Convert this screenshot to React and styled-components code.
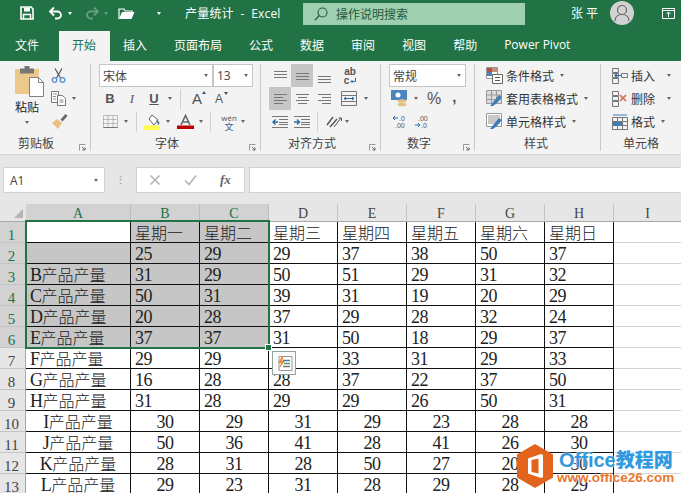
import React from 'react';
import styled, { createGlobalStyle } from 'styled-components';

const UI_FONT = '"Open Sans", "Noto Sans CJK SC", sans-serif';
const CELL_FONT = '"Liberation Serif", "Noto Sans CJK SC", serif';
const GREEN = '#217346';

const GlobalStyle = createGlobalStyle`
  html, body { margin: 0; padding: 0; background: #fff; }
  body { font-family: ${UI_FONT}; color: #333; }
`;

const Page = styled.div`
  width: 681px;
  height: 493px;
  overflow: hidden;
  position: relative;
`;

/* title bar */
const TitleBar = styled.div`
  height: 31px;
  background: ${GREEN};
  display: flex;
  align-items: center;
  box-sizing: border-box;
  padding-bottom: 5px;
  color: #fff;
  font-size: 12px;
`;
const QuickIcon = styled.div`
  width: ${p => p.$w}px;
  margin-left: ${p => p.$ml || 0}px;
  display: flex;
  align-items: center;
  opacity: ${p => (p.$dim ? 0.3 : 1)};
`;
const TitleCaret = styled.span`
  width: 0;
  height: 0;
  margin-left: ${p => p.$ml || 5}px;
  border-left: 2.5px solid transparent;
  border-right: 2.5px solid transparent;
  border-top: 3px solid #fff;
`;
const DocTitle = styled.div`
  margin-left: 28px;
  width: 118px;
  letter-spacing: 0.2px;
  white-space: pre;
`;
const SearchBox = styled.div`
  width: 222px;
  height: 22px;
  margin-top: 2px;
  background: #9fcfb1;
  color: #24593a;
  display: flex;
  align-items: center;
  gap: 8px;
  padding-left: 11px;
  box-sizing: border-box;
`;
const UserName = styled.div`
  margin-left: 46px;
  width: 39px;
  white-space: pre;
`;
const Avatar = styled.div`
  width: 24px;
  height: 24px;
  border-radius: 50%;
  background: #d2d2d2;
  display: flex;
  align-items: center;
  justify-content: center;
`;

/* tabs */
const TabBar = styled.div`
  height: 30px;
  background: ${GREEN};
  display: flex;
  padding-left: 1.5px;
`;
const Tab = styled.div`
  padding: 0 13.5px 3px;
  margin-right: ${p => p.$mr || 0}px;
  display: flex;
  align-items: center;
  font-size: 12px;
  color: ${p => (p.$active ? GREEN : '#fff')};
  background: ${p => (p.$active ? '#f3f3f3' : 'transparent')};
  white-space: nowrap;
`;

/* ribbon */
const Ribbon = styled.div`
  height: 94px;
  background: #f3f3f3;
  border-bottom: 1px solid #d6d6d6;
  display: flex;
  box-sizing: border-box;
  padding-top: 3px;
`;
const Group = styled.div`
  width: ${p => p.$w}px;
  flex: none;
  height: 87px;
  position: relative;
  border-right: ${p => (p.$last ? 'none' : '1px solid #c8c8c8')};
  box-sizing: border-box;
  display: flex;
  flex-direction: column;
`;
const GroupBody = styled.div`
  height: 72px;
  padding-left: ${p => p.$pl || 0}px;
  display: flex;
  flex-direction: ${p => p.$dir || 'column'};
  box-sizing: border-box;
`;
const GroupLabel = styled.div`
  font-size: 12px;
  height: 15px;
  line-height: 15px;
  padding-left: ${p => p.$pl}px;
  color: #444;
`;
const Launcher = styled.svg`
  position: absolute;
  right: 4px;
  bottom: 0;
  width: 7px;
  height: 7px;
`;
const Row = styled.div`
  height: ${p => p.$h || 23}px;
  display: flex;
  align-items: center;
  gap: ${p => p.$gap || 0}px;
  padding-left: ${p => p.$pl || 0}px;
`;
const Caret = styled.span`
  display: inline-block;
  flex: none;
  width: 0;
  height: 0;
  margin-left: ${p => p.$ml || 0}px;
  border-left: 2.5px solid transparent;
  border-right: 2.5px solid transparent;
  border-top: 3px solid #666;
`;
const RowDivider = styled.span`
  width: 1px;
  height: 20px;
  background: #d0d0d0;
  margin: 0 ${p => p.$mr || 8}px 0 ${p => p.$ml || 8}px;
  flex: none;
`;
const Spacer = styled.span`
  width: ${p => p.$w}px;
  flex: none;
`;
const Select = styled.div`
  width: ${p => p.$w}px;
  height: 23px;
  background: #fff;
  border: 1px solid #c6c6c6;
  box-sizing: border-box;
  display: flex;
  align-items: center;
  justify-content: space-between;
  padding: 0 4px 0 3px;
  font-size: 12px;
  color: #444;
  flex: none;
`;
const FontLetter = styled.span`
  width: ${p => p.$w || 22}px;
  text-align: center;
  font-family: ${p => (p.$serif ? '"Liberation Serif", serif' : '"Liberation Sans", sans-serif')};
  font-size: ${p => p.$size || 13}px;
  font-weight: ${p => (p.$bold ? 700 : 400)};
  font-style: ${p => (p.$italic ? 'italic' : 'normal')};
  text-decoration: ${p => (p.$under ? 'underline' : 'none')};
  color: #555;
  flex: none;
`;
const GrowLetter = styled(FontLetter)`
  position: relative;
  &::after {
    content: '';
    position: absolute;
    right: 2px;
    top: ${p => (p.$down ? 0 : 1)}px;
    border-left: 2.5px solid transparent;
    border-right: 2.5px solid transparent;
    ${p => (p.$down ? 'border-top: 3px solid #44546a;' : 'border-bottom: 3px solid #44546a;')}
  }
`;
const WenButton = styled.div`
  width: 18px;
  margin-left: 1px;
  display: flex;
  flex-direction: column;
  align-items: center;
  font-size: 8px;
  line-height: 9px;
  color: #555;
  & b {
    font-weight: 400;
    color: #2b579a;
    font-size: 9px;
  }
`;
const AlignTop = styled.div`
  display: flex;
`;
const AlignGrid = styled.div`
  display: grid;
  grid-template-columns: repeat(3, 22px);
  grid-auto-rows: 23px;
  flex: none;
`;
const AlignCell = styled.div`
  width: 22px;
  height: 23px;
  flex: none;
  display: flex;
  align-items: center;
  justify-content: center;
  background: ${p => (p.$on ? '#c6c6c6' : 'transparent')};
`;
const AlignSide = styled.div`
  display: flex;
  flex-direction: column;
  margin-left: 6px;
`;
const WrapText = styled.div`
  width: 16px;
  margin-left: 1px;
  font-family: "Liberation Sans", sans-serif;
  font-size: 10px;
  line-height: 9px;
  font-weight: 700;
  color: #555;
  text-align: center;
  & svg { margin-left: 1px; }
`;
const BigLabel = styled.div`
  width: 24px;
  margin-top: 3px;
  font-size: 12px;
  line-height: 16px;
  color: #222;
  display: flex;
  flex-direction: column;
  align-items: center;
  gap: 5px;
`;
const PasteCol = styled.div`
  display: flex;
  flex-direction: column;
  margin-left: 15px;
  margin-top: 2px;
`;
const SmallCol = styled.div`
  display: flex;
  flex-direction: column;
  margin-left: 7px;
  gap: 5px;
  padding-top: 2px;
`;
const SmallRow = styled.div`
  display: flex;
  align-items: center;
  height: 18px;
`;
const Percent = styled.span`
  font-family: "Liberation Sans", sans-serif;
  font-size: 16px;
  color: #555;
  margin-left: 9px;
`;
const Comma = styled.span`
  font-family: "Liberation Sans", sans-serif;
  font-weight: 700;
  font-size: 15px;
  color: #555;
  margin-left: 11px;
  margin-top: -5px;
`;
const CommandRow = styled.div`
  height: 23px;
  display: flex;
  align-items: center;
  font-size: 12px;
  color: #333;
  gap: 3px;
  & svg { flex: none; }
`;

/* formula bar */
const FormulaBar = styled.div`
  height: 49px;
  background: #e6e6e6;
  display: flex;
  padding: 12px 0 0 3px;
  box-sizing: border-box;
`;
const FormulaBox = styled.div`
  height: 26px;
  background: #fff;
  border: 1px solid #d2d2d2;
  box-sizing: border-box;
  display: flex;
  align-items: center;
`;
const NameBox = styled(FormulaBox)`
  width: 102px;
  justify-content: space-between;
  padding: 0 6px;
  font-size: 12px;
  color: #444;
`;
const Grip = styled.div`
  width: 31px;
  text-align: center;
  color: #a8a8a8;
  font-size: 11px;
  line-height: 26px;
  font-weight: 700;
`;
const FxBox = styled(FormulaBox)`
  width: 109px;
  padding-left: 12px;
  gap: 23px;
`;
const FxText = styled.span`
  font-family: "Liberation Serif", serif;
  font-style: italic;
  font-weight: 700;
  font-size: 13px;
  color: #666;
`;
const FormulaInput = styled(FormulaBox)`
  flex: 1;
  margin-left: 4px;
  border-right: none;
`;

/* sheet */
const Sheet = styled.div`
  position: relative;
  display: grid;
  grid-template-columns: 26px 105px repeat(7, 69px) 68px;
  grid-template-rows: 18px;
  grid-auto-rows: 21px;
  background: #fff;
  font-family: ${CELL_FONT};
`;
const Corner = styled.div`
  background: #e6e6e6;
  border-bottom: 1px solid #a8a8a8;
  position: relative;
  &::after {
    content: '';
    position: absolute;
    right: 3px;
    bottom: 3px;
    border-left: 9px solid transparent;
    border-bottom: 9px solid #b4b4b4;
  }
`;
const ColHead = styled.div`
  background: ${p => (p.$sel ? '#d2d2d2' : '#e6e6e6')};
  border-right: 1px solid ${p => (p.$sel ? '#bdbdbd' : '#c4c4c4')};
  border-bottom: 1px solid #a8a8a8;
  box-sizing: border-box;
  font-size: 14px;
  line-height: 20px;
  overflow: hidden;
  text-align: center;
  color: ${p => (p.$sel ? GREEN : '#444')};
`;
const RowHead = styled.div`
  background: ${p => (p.$sel ? '#d2d2d2' : '#e6e6e6')};
  border-bottom: 1px solid #c4c4c4;
  border-right: 1px solid #a8a8a8;
  box-sizing: border-box;
  padding-right: 2px;
  font-size: 15px;
  line-height: 26px;
  overflow: hidden;
  text-align: center;
  color: ${p => (p.$sel ? GREEN : '#444')};
`;
const Cell = styled.div`
  background: ${p => (p.$sel ? '#c6c6c6' : '#fff')};
  border-right: 1px solid ${p => (p.$empty ? '#d4d4d4' : '#111')};
  border-bottom: 1px solid ${p => (p.$empty ? '#d4d4d4' : '#111')};
  box-sizing: border-box;
  padding: 0 ${p => (p.$center ? 0 : 4)}px;
  text-align: ${p => (p.$center ? 'center' : 'left')};
  font-size: 18px;
  font-weight: 300;
  letter-spacing: -0.6px;
  line-height: 23px;
  color: #222;
  white-space: nowrap;
  overflow: hidden;
`;
const CjkText = styled.span`
  font-size: 16px;
  letter-spacing: 0;
`;
const Selection = styled.div`
  position: absolute;
  left: 25px;
  top: 16px;
  width: 245px;
  height: 129px;
  border: 2px solid ${GREEN};
  box-sizing: border-box;
  pointer-events: none;
`;
const Handle = styled.div`
  position: absolute;
  right: -4px;
  bottom: -4px;
  width: 5px;
  height: 5px;
  background: ${GREEN};
  border: 1px solid #fff;
`;
const QuickButton = styled.div`
  position: absolute;
  left: 272px;
  top: 147px;
  width: 24px;
  height: 24px;
  box-sizing: border-box;
  background: #fafafa;
  border: 1px solid #8fa89a;
  display: flex;
  align-items: center;
  justify-content: center;
`;

/* site watermark */
const Watermark = styled.div`
  position: absolute;
  left: 517px;
  top: 444px;
  display: flex;
`;
const WatermarkText = styled.div`
  margin-left: 6px;
  padding-top: 5px;
  font-family: "Liberation Sans", "Noto Sans CJK SC", sans-serif;
  font-weight: 700;
  display: flex;
  flex-direction: column;
  white-space: nowrap;
`;
const BrandLine = styled.span`
  font-size: 20px;
  line-height: 22px;
  color: #2f9ae0;
  text-shadow: 0 0 2px #fff, 0 0 2px #fff;
  & b {
    font-size: 19px;
  }
`;
const SiteLine = styled.span`
  margin-left: -2px;
  font-size: 13.5px;
  line-height: 11px;
  color: #e8772e;
  text-shadow: 0 0 2px #fff, 0 0 2px #fff;
`;

const Svg = ({ w = 16, h = 16, children }) => (
  <svg width={w} height={h} viewBox={`0 0 ${w} ${h}`} fill="none">{children}</svg>
);

const LauncherIcon = () => (
  <Launcher viewBox="0 0 7 7" fill="none">
    <path d="M.5 6.500v-6h6" stroke="#999" />
    <path d="M3 3l3 3M6 3.500v2.500H3.500" stroke="#666" />
  </Launcher>
);

const SaveIcon = () => (
  <Svg w={14} h={14}>
    <path d="M1 1h10l2 2v10H1z" stroke="#fff" strokeWidth="1.6" />
    <path d="M4 1.500h6v4H4z" fill="#fff" />
    <path d="M3.500 13V8.500h7V13" stroke="#fff" strokeWidth="1.5" />
  </Svg>
);
const UndoIcon = () => (
  <Svg w={14} h={14}>
    <path d="M1.500 5.500h7a3.500 3.500 0 010 7H6" stroke="#fff" strokeWidth="1.8" />
    <path d="M5 1.500L1 5.500l4 4" stroke="#fff" strokeWidth="1.8" />
  </Svg>
);
const RedoIcon = () => (
  <Svg w={14} h={14}>
    <path d="M12.500 5.500h-7a3.500 3.500 0 000 7H8" stroke="#fff" strokeWidth="1.8" />
    <path d="M9 1.500l4 4-4 4" stroke="#fff" strokeWidth="1.8" />
  </Svg>
);
const FolderIcon = () => (
  <Svg w={17} h={14}>
    <path d="M1 13V3h5l1 2h7v1" stroke="#fff" strokeWidth="1.2" />
    <path d="M1 13l3-7h12.500l-3 7z" fill="#fff" />
  </Svg>
);
const SearchGlass = () => (
  <Svg w={14} h={14}>
    <circle cx="8.500" cy="5.500" r="4.500" stroke="#2d5c40" strokeWidth="1.1" />
    <path d="M5.200 8.800L.8 13.200" stroke="#2d5c40" strokeWidth="1.3" />
  </Svg>
);
const PersonIcon = () => (
  <Svg w={16} h={18}>
    <circle cx="8" cy="6" r="4.500" stroke="#666" strokeWidth="1.2" />
    <path d="M1 17c0-4 3-6.500 7-6.500s7 2.500 7 6.500" stroke="#666" strokeWidth="1.2" />
  </Svg>
);
const DisplayIcon = () => (
  <Svg w={13} h={11}>
    <path d="M.5.500h12v10H.5z" stroke="#fff" />
    <path d="M.5 2.500h12M6.500 9V4.500M4.500 6l2-2 2 2" stroke="#fff" />
  </Svg>
);
const PasteIcon = () => (
  <Svg w={29} h={31}>
    <path d="M0 3h24v25H0z" fill="#ecc98a" />
    <path d="M5 2.500h14v5H5z" fill="#777" />
    <path d="M9.500 0h5v3h-5z" fill="#777" />
    <path d="M14.500 11.500h9l5 5v14h-14z" fill="#fff" stroke="#808080" />
    <path d="M23.500 11.500v5h5" stroke="#808080" />
  </Svg>
);
const CutIcon = () => (
  <Svg w={15} h={15}>
    <path d="M4 .5l5.500 9.500M11 .5L5.500 10" stroke="#555" strokeWidth="1.2" />
    <circle cx="3.500" cy="12" r="2.300" stroke="#5b8fc2" strokeWidth="1.3" />
    <circle cx="11.500" cy="12" r="2.300" stroke="#5b8fc2" strokeWidth="1.3" />
  </Svg>
);
const CopyIcon = () => (
  <Svg w={16} h={15}>
    <path d="M.5.500h7v11h-7z" fill="#fff" stroke="#777" />
    <path d="M6.500 4.500h5l3 3v7h-8z" fill="#fff" stroke="#777" />
    <path d="M2 3h4M2 5.500h3M2 8h3M8.500 9h4M8.500 11h4" stroke="#888" />
  </Svg>
);
const BrushIcon = () => (
  <Svg w={17} h={16}>
    <path d="M1 10l5-4 5 4-4 6z" fill="#e7c083" />
    <path d="M9.500 6.500l5-5.500 2 2-5 5.500z" fill="#666" />
  </Svg>
);
const BorderIcon = () => (
  <Svg w={15} h={13}>
    <path d="M.5.500h14v12H.5zM5 .5v12M10 .5v12M.5 4.500h14M.5 8.500h14" stroke="#888" strokeDasharray="1 1" />
    <path d="M.5 12.500h14" stroke="#777" />
  </Svg>
);
const FillIcon = () => (
  <Svg w={17} h={16}>
    <path d="M5 5l3-4 6 5-4 5z" fill="#fff" stroke="#666" />
    <path d="M12 5.500l3.500 3-1 3z" fill="#44698f" />
    <path d="M0 11.500h16V16H0z" fill="#ffff4d" />
  </Svg>
);
const FontColorIcon = () => (
  <Svg w={17} h={16}>
    <path d="M4 11L8.500 1.500 13 11M5.500 8h6" stroke="#666" strokeWidth="1.6" />
    <path d="M0 11.500h17V15H0z" fill="#c00000" />
  </Svg>
);
const Lines = ({ ys, x }) => (
  <Svg w={15} h={14}>
    {ys.map((y, i) => <path key={y} d={`M${x[i][0]} ${y}h${x[i][1]}`} stroke="#777" />)}
  </Svg>
);
const IndentIcon = ({ right }) => (
  <Svg w={16} h={12}>
    <path d="M0 .5h16M7 3.500h9M7 6.500h9M7 8.500h9M0 11.500h16" stroke="#777" />
    <path d={right ? 'M0 6h5M3 3.500L5.500 6 3 8.500' : 'M6 6H1M3.500 3.500L1 6l2.500 2.500'} stroke="#2b6ca8" strokeWidth="1.4" />
  </Svg>
);
const OrientIcon = () => (
  <Svg w={18} h={15}>
    <path d="M2 11l6-8M5 13l7-8" stroke="#555" strokeWidth="1.4" />
    <path d="M9 13l7-9M13.500 4h3v3" stroke="#555" />
  </Svg>
);
const ReturnMark = () => (
  <svg width="6" height="6" viewBox="0 0 6 6" fill="none">
    <path d="M5.500 0v3.500H1M2.500 2L1 3.500 2.500 5" stroke="#2b6ca8" />
  </svg>
);
const MergeIcon = () => (
  <Svg w={16} h={15}>
    <path d="M.5.500h15v14H.5zM.5 4.500h15M.5 10.500h15" stroke="#777" />
    <path d="M3 7.500h10M5 6L3 7.500 5 9M11 6l2 1.500L11 9" stroke="#2b6ca8" />
  </Svg>
);
const MoneyIcon = () => (
  <Svg w={17} h={17}>
    <path d="M0 0h16v10H0z" fill="#4a86bd" />
    <circle cx="7" cy="5" r="2.500" fill="#fff" />
    <ellipse cx="11" cy="11" rx="4.500" ry="1.800" fill="#e7c083" />
    <ellipse cx="11" cy="14.500" rx="4.500" ry="1.800" fill="#e7c083" />
  </Svg>
);
const DecimalIcon = ({ up }) => (
  <Svg w={16} h={15}>
    <text x={up ? 7 : 4} y="6.500" fontSize="7" fill="#555" fontFamily="Liberation Sans">{up ? '.0' : '.00'}</text>
    <text x={up ? 3 : 7} y="13.500" fontSize="7" fill="#555" fontFamily="Liberation Sans">{up ? '.00' : '.0'}</text>
    <path d={up ? 'M6 4H1M3 2L1 4l2 2' : 'M1 11h5M4 9l2 2-2 2'} stroke="#2b6ca8" />
  </Svg>
);
const CondIcon = () => (
  <Svg w={17} h={17}>
    <path d="M.5.500h11v11H.5z" fill="#fff" stroke="#999" />
    <path d="M1 1h5v4H1z" fill="#b5503c" />
    <path d="M6 1h5v4H6z" fill="#c98a80" />
    <path d="M1 5h5v4H1z" fill="#4f81bd" />
    <path d="M6.500 7.500h10v9h-10z" fill="#fff" stroke="#666" />
    <path d="M9 10.500h5M9 13.500h5" stroke="#555" />
  </Svg>
);
const TableIcon = () => (
  <Svg w={17} h={17}>
    <path d="M.5.500h15v13H.5z" fill="#dcdcdc" />
    <path d="M.5.500h15v13H.5zM5.500.5v13M10.500.5v13M.5 5h15M.5 9.500h15" stroke="#999" />
    <path d="M4 16l4-5 5-6 3 2-5 6-4 3z" fill="#3d7cb8" />
  </Svg>
);
const StyleIcon = () => (
  <Svg w={17} h={17}>
    <path d="M.5.500h15v13H.5z" fill="#fff" stroke="#999" />
    <path d="M2 2h12v9H2z" fill="#c8c8c8" />
    <path d="M4 16l4-5 5-6 3 2-5 6-4 3z" fill="#3d7cb8" />
  </Svg>
);
const InsertIcon = () => (
  <Svg w={16} h={16}>
    <path d="M.5.500h6v4h-6zM.5 5.500h6v4h-6zM.5 10.500h6v5h-6z" stroke="#777" />
    <path d="M9.500 5.500h6v4h-6z" stroke="#777" />
    <path d="M9 7.500H3M5 5.500l-2 2 2 2" stroke="#2b6ca8" strokeWidth="1.2" />
  </Svg>
);
const DeleteIcon = () => (
  <Svg w={16} h={16}>
    <path d="M.5.500h6v4h-6zM.5 5.500h6v4h-6zM.5 10.500h6v5h-6z" stroke="#777" />
    <path d="M8 4l6 6M14 4l-6 6" stroke="#d2694f" strokeWidth="1.6" />
  </Svg>
);
const FormatIcon = () => (
  <Svg w={16} h={16}>
    <path d="M.5 3.500h15v12H.5zM5.500 3.500v12M10.500 3.500v12M.5 7.500h15M.5 11.500h15" stroke="#777" />
    <path d="M1 8h9v4H1z" fill="#3d7cb8" />
    <path d="M1 1h14" stroke="#3d7cb8" />
  </Svg>
);
const CrossIcon = () => (
  <Svg w={12} h={12}><path d="M1.500 1.500l9 9M10.500 1.500l-9 9" stroke="#b4b4b4" strokeWidth="1.6" /></Svg>
);
const CheckIcon = () => (
  <Svg w={13} h={12}><path d="M1 6.500l4 4 7-9" stroke="#b4b4b4" strokeWidth="1.6" /></Svg>
);
const QuickIconSvg = () => (
  <Svg w={17} h={17}>
    <path d="M3 1.500h13v14H3z" fill="#fff" stroke="#999" />
    <path d="M6 1L2 8h3l-2 6 6-8H6l2-5z" fill="#e8913c" />
    <path d="M7 5.500h7" stroke="#4a7ba8" strokeWidth="1.5" />
    <path d="M8 8.500h6" stroke="#4f9a6e" strokeWidth="1.5" />
    <path d="M7 11.500h7" stroke="#777" strokeWidth="1.5" />
  </Svg>
);
const OfficeLogo = () => (
  <Svg w={36} h={44}>
    <path d="M18 0l18 10.500v23L18 44 0 33.500v-23z" fill="#e2641c" />
    <path d="M24 10l-13 4.500v15L24 34l2-1V11z" fill="#fff" />
    <path d="M21.500 14.500v15l-7-1.500V16z" fill="#e2641c" />
  </Svg>
);

const TABS = ['文件', '开始', '插入', '页面布局', '公式', '数据', '审阅', '视图', '帮助', 'Power Pivot'];
const COLS = ['A', 'B', 'C', 'D', 'E', 'F', 'G', 'H', 'I'];
const ROWS = [
  ['', '星期一', '星期二', '星期三', '星期四', '星期五', '星期六', '星期日'],
  ['', 25, 29, 29, 37, 38, 50, 37],
  ['B产品产量', 31, 29, 50, 51, 29, 31, 32],
  ['C产品产量', 50, 31, 39, 31, 19, 20, 29],
  ['D产品产量', 20, 28, 37, 29, 28, 32, 24],
  ['E产品产量', 37, 37, 31, 50, 18, 29, 37],
  ['F产品产量', 29, 29, 29, 33, 31, 29, 33],
  ['G产品产量', 16, 28, 28, 37, 22, 37, 50],
  ['H产品产量', 31, 28, 29, 29, 26, 50, 31],
  ['I产品产量', 30, 29, 31, 29, 23, 28, 28],
  ['J产品产量', 50, 36, 41, 28, 41, 26, 30],
  ['K产品产量', 28, 31, 28, 50, 27, 20, 30],
  ['L产品产量', 29, 23, 31, 28, 29, 28, 29],
];

// latin part stays in the serif, the chinese part gets its own size
const cellText = value => {
  if (typeof value === 'number') return value;
  const m = /^([A-Z]?)(.*)$/.exec(value);
  return <>{m[1]}<CjkText>{m[2]}</CjkText></>;
};

const Commands = ({ icon, text, mr }) => (
  <CommandRow>
    {icon}
    <span>{text}</span>
    <Caret $ml={mr} />
  </CommandRow>
);

const App = () => {
  return (
    <Page>
      <GlobalStyle />
      <TitleBar>
        <QuickIcon $w={14} $ml={20}><SaveIcon /></QuickIcon>
        <QuickIcon $w={24} $ml={15}><UndoIcon /><TitleCaret /></QuickIcon>
        <QuickIcon $w={24} $ml={12} $dim><RedoIcon /><TitleCaret /></QuickIcon>
        <QuickIcon $w={17} $ml={9}><FolderIcon /></QuickIcon>
        <QuickIcon $w={5} $ml={17}><TitleCaret $ml={0} /></QuickIcon>
        <DocTitle>{'产量统计  -  Excel'}</DocTitle>
        <SearchBox><SearchGlass />操作说明搜索</SearchBox>
        <UserName>{'张 平'}</UserName>
        <Avatar><PersonIcon /></Avatar>
        <QuickIcon $w={13} $ml={28}><DisplayIcon /></QuickIcon>
      </TitleBar>
      <TabBar>
        {TABS.map((t, i) => (
          <Tab key={t} $active={i === 1} $mr={i === 0 ? 6 : 0}>{t}</Tab>
        ))}
      </TabBar>
      <Ribbon>
        <Group $w={91}>
          <GroupBody $dir="row">
            <PasteCol>
              <PasteIcon />
              <BigLabel>粘贴<Caret /></BigLabel>
            </PasteCol>
            <SmallCol>
              <SmallRow><CutIcon /></SmallRow>
              <SmallRow><CopyIcon /><Caret $ml={5} /></SmallRow>
              <SmallRow><BrushIcon /></SmallRow>
            </SmallCol>
          </GroupBody>
          <GroupLabel $pl={18}>剪贴板</GroupLabel>
          <LauncherIcon />
        </Group>
        <Group $w={170}>
          <GroupBody $pl={8}>
            <Row>
              <Select $w={114}>宋体<Caret /></Select>
              <Select $w={40}>13<Caret /></Select>
            </Row>
            <Row>
              <FontLetter $bold>B</FontLetter>
              <FontLetter $italic $serif>I</FontLetter>
              <FontLetter $under $bold>U</FontLetter>
              <Caret $ml={3} />
              <RowDivider $ml={8} $mr={5} />
              <GrowLetter $size={15}>A</GrowLetter>
              <GrowLetter $size={12} $down>A</GrowLetter>
            </Row>
            <Row $pl={4}>
              <BorderIcon />
              <Caret $ml={6} />
              <RowDivider $ml={8} $mr={7} />
              <FillIcon />
              <Caret $ml={5} />
              <Spacer $w={7} />
              <FontColorIcon />
              <Caret $ml={5} />
              <RowDivider $ml={7} $mr={8} />
              <WenButton>wén<b>文</b></WenButton>
              <Caret $ml={3} />
            </Row>
          </GroupBody>
          <GroupLabel $pl={64}>字体</GroupLabel>
          <LauncherIcon />
        </Group>
        <Group $w={120}>
          <GroupBody $pl={8}>
            <AlignTop>
              <AlignGrid>
                <AlignCell><Lines ys={[2.5, 5.5, 8.5]} x={[[1, 13], [1, 13], [1, 13]]} /></AlignCell>
                <AlignCell $on><Lines ys={[4.5, 7.5, 10.5]} x={[[1, 13], [1, 13], [1, 13]]} /></AlignCell>
                <AlignCell><Lines ys={[7.5, 10.5, 13.5]} x={[[1, 13], [1, 13], [1, 13]]} /></AlignCell>
                <AlignCell $on><Lines ys={[2.5, 5.5, 8.5, 11.5]} x={[[1, 13], [1, 9], [1, 13], [1, 9]]} /></AlignCell>
                <AlignCell><Lines ys={[2.5, 5.5, 8.5, 11.5]} x={[[1, 13], [3, 9], [1, 13], [3, 9]]} /></AlignCell>
                <AlignCell><Lines ys={[2.5, 5.5, 8.5, 11.5]} x={[[1, 13], [5, 9], [1, 13], [5, 9]]} /></AlignCell>
              </AlignGrid>
              <AlignSide>
                <Row><WrapText>ab<br />c<ReturnMark /></WrapText></Row>
                <Row><MergeIcon /><Caret $ml={7} /></Row>
              </AlignSide>
            </AlignTop>
            <Row>
              <AlignCell><IndentIcon /></AlignCell>
              <AlignCell><IndentIcon right /></AlignCell>
              <RowDivider $ml={4} $mr={7} />
              <OrientIcon />
              <Caret $ml={2} />
            </Row>
          </GroupBody>
          <GroupLabel $pl={27}>对齐方式</GroupLabel>
          <LauncherIcon />
        </Group>
        <Group $w={94}>
          <GroupBody $pl={8}>
            <Row><Select $w={77}>常规<Caret /></Select></Row>
            <Row $pl={2}><MoneyIcon /><Caret $ml={6} /><Percent>%</Percent><Comma>,</Comma></Row>
            <Row $pl={3} $gap={6}><DecimalIcon up /><DecimalIcon /></Row>
          </GroupBody>
          <GroupLabel $pl={26}>数字</GroupLabel>
          <LauncherIcon />
        </Group>
        <Group $w={126}>
          <GroupBody $pl={11}>
            <Commands icon={<CondIcon />} text="条件格式" mr={3} />
            <Commands icon={<TableIcon />} text="套用表格格式" mr={3} />
            <Commands icon={<StyleIcon />} text="单元格样式" mr={3} />
          </GroupBody>
          <GroupLabel $pl={49}>样式</GroupLabel>
        </Group>
        <Group $w={80} $last>
          <GroupBody $pl={11}>
            <Commands icon={<InsertIcon />} text="插入" mr={9} />
            <Commands icon={<DeleteIcon />} text="删除" mr={9} />
            <Commands icon={<FormatIcon />} text="格式" mr={3} />
          </GroupBody>
          <GroupLabel $pl={22}>单元格</GroupLabel>
        </Group>
      </Ribbon>
      <FormulaBar>
        <NameBox>A1<Caret /></NameBox>
        <Grip>⋮</Grip>
        <FxBox><CrossIcon /><CheckIcon /><FxText>fx</FxText></FxBox>
        <FormulaInput />
      </FormulaBar>
      <Sheet>
        <Corner />
        {COLS.map((c, i) => <ColHead key={c} $sel={i < 3}>{c}</ColHead>)}
        {ROWS.map((row, r) => (
          <React.Fragment key={r}>
            <RowHead $sel={r < 6}>{r + 1}</RowHead>
            {row.map((value, c) => (
              <Cell
                key={c}
                $sel={r < 6 && c < 3 && !(r === 0 && c === 0)}
                $center={r >= 9}
              >
                {cellText(value)}
              </Cell>
            ))}
            <Cell $empty />
          </React.Fragment>
        ))}
        <Selection><Handle /></Selection>
        <QuickButton><QuickIconSvg /></QuickButton>
      </Sheet>
      <Watermark>
        <OfficeLogo />
        <WatermarkText>
          <BrandLine>Office<b>教程网</b></BrandLine>
          <SiteLine>www.office26.com</SiteLine>
        </WatermarkText>
      </Watermark>
    </Page>
  );
};

export default App;
